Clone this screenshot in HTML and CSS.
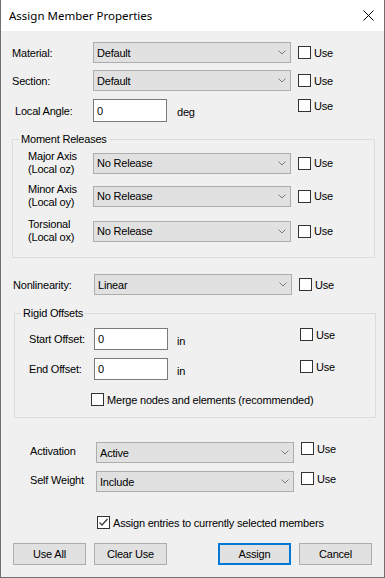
FILE: index.html
```html
<!DOCTYPE html>
<html lang="en">
<head>
  <meta charset="UTF-8">
  <title>Assign Member Properties</title>
  <link rel="stylesheet" href="styles.css">
</head>
<body>
  <div class="window">
    <!-- barra de titulo -->
    <div class="titlebar">
      <span class="title">Assign Member Properties</span>
      <svg class="close" width="11" height="11" viewBox="0 0 11 11">
        <path d="M0.5 0.5 L10.5 10.5 M10.5 0.5 L0.5 10.5" stroke="#000" stroke-width="1" fill="none"/>
      </svg>
    </div>

    <div class="content">
      <div class="row row-material">
        <span class="lbl">Material:</span>
        <div class="combo"><span>Default</span><svg width="8" height="5" viewBox="0 0 8 5"><polyline points="0.5,0.5 4,4 7.5,0.5" stroke="#7a7a7a" fill="none"/></svg></div>
        <label class="use"><span class="cb"></span>Use</label>
      </div>

      <div class="row row-section">
        <span class="lbl">Section:</span>
        <div class="combo"><span>Default</span><svg width="8" height="5" viewBox="0 0 8 5"><polyline points="0.5,0.5 4,4 7.5,0.5" stroke="#7a7a7a" fill="none"/></svg></div>
        <label class="use"><span class="cb"></span>Use</label>
      </div>

      <div class="row row-angle">
        <span class="lbl lbl-angle">Local Angle:</span>
        <input class="field" type="text" value="0">
        <span class="unit">deg</span>
        <label class="use use-top"><span class="cb"></span>Use</label>
      </div>

      <fieldset class="group group-moment">
        <legend>Moment Releases</legend>
        <div class="row row-major">
          <span class="lbl lbl-group">Major Axis<br>(Local oz)</span>
          <div class="combo"><span>No Release</span><svg width="8" height="5" viewBox="0 0 8 5"><polyline points="0.5,0.5 4,4 7.5,0.5" stroke="#7a7a7a" fill="none"/></svg></div>
          <label class="use"><span class="cb"></span>Use</label>
        </div>
        <div class="row row-minor">
          <span class="lbl lbl-group">Minor Axis<br>(Local oy)</span>
          <div class="combo"><span>No Release</span><svg width="8" height="5" viewBox="0 0 8 5"><polyline points="0.5,0.5 4,4 7.5,0.5" stroke="#7a7a7a" fill="none"/></svg></div>
          <label class="use"><span class="cb"></span>Use</label>
        </div>
        <div class="row row-torsion">
          <span class="lbl lbl-group">Torsional<br>(Local ox)</span>
          <div class="combo"><span>No Release</span><svg width="8" height="5" viewBox="0 0 8 5"><polyline points="0.5,0.5 4,4 7.5,0.5" stroke="#7a7a7a" fill="none"/></svg></div>
          <label class="use"><span class="cb"></span>Use</label>
        </div>
      </fieldset>

      <div class="row row-nonlin">
        <span class="lbl lbl-nonlin">Nonlinearity:</span>
        <div class="combo"><span>Linear</span><svg width="8" height="5" viewBox="0 0 8 5"><polyline points="0.5,0.5 4,4 7.5,0.5" stroke="#7a7a7a" fill="none"/></svg></div>
        <label class="use"><span class="cb"></span>Use</label>
      </div>

      <fieldset class="group group-rigid">
        <legend>Rigid Offsets</legend>
        <div class="row row-start">
          <span class="lbl lbl-offset">Start Offset:</span>
          <input class="field field-offset" type="text" value="0">
          <span class="unit unit-offset">in</span>
          <label class="use use-top"><span class="cb"></span>Use</label>
        </div>
        <div class="row row-end">
          <span class="lbl lbl-offset">End Offset:</span>
          <input class="field field-offset" type="text" value="0">
          <span class="unit unit-offset">in</span>
          <label class="use use-top2"><span class="cb"></span>Use</label>
        </div>
        <label class="check row-merge"><span class="cb"></span>Merge nodes and elements (recommended)</label>
      </fieldset>

      <div class="row row-activation">
        <span class="lbl lbl-bottom">Activation</span>
        <div class="combo"><span>Active</span><svg width="8" height="5" viewBox="0 0 8 5"><polyline points="0.5,0.5 4,4 7.5,0.5" stroke="#7a7a7a" fill="none"/></svg></div>
        <label class="use use-top"><span class="cb"></span>Use</label>
      </div>

      <div class="row row-weight">
        <span class="lbl lbl-bottom">Self Weight</span>
        <div class="combo"><span>Include</span><svg width="8" height="5" viewBox="0 0 8 5"><polyline points="0.5,0.5 4,4 7.5,0.5" stroke="#7a7a7a" fill="none"/></svg></div>
        <label class="use use-top1"><span class="cb"></span>Use</label>
      </div>

      <label class="check row-assign">
        <span class="cb cb-checked"><svg width="11" height="11" viewBox="0 0 11 11"><polyline points="1.5,5.5 4,8 9.5,2" stroke="#3c3c3c" stroke-width="1.3" fill="none"/></svg></span>
        Assign entries to currently selected members
      </label>

      <!-- botoes -->
      <div class="buttons">
        <button class="btn">Use All</button>
        <button class="btn">Clear Use</button>
        <button class="btn btn-default">Assign</button>
        <button class="btn">Cancel</button>
      </div>
    </div>
  </div>
</body>
</html>
```

FILE: styles.css
```css
body {
  margin: 0;
  font-family: "Liberation Sans", Arial, sans-serif;
  font-size: 11px;
  letter-spacing: -0.2px;
  color: #000;
  background: #f0f0f0;
}
.window {
  width: 385px;
  height: 578px;
  box-sizing: border-box;
  border: 1px solid #707070;
  border-top: none;
  background: #f0f0f0;
}
.titlebar {
  height: 31px;
  background: #fff;
  display: flex;
  align-items: center;
  justify-content: space-between;
  padding: 0 10px 0 8px;
}
.title {
  font-family: "Noto Sans", "Liberation Sans", sans-serif;
  font-size: 11.5px;
  letter-spacing: 0;
}
.close {
  display: block;
}
.content {
  padding: 0 9px 0 11px;
}
.row {
  display: flex;
  align-items: center;
}
.lbl {
  flex: none;
  width: 81px;
  box-sizing: border-box;
}
.combo {
  flex: none;
  width: 198px;
  height: 21px;
  box-sizing: border-box;
  border: 1px solid #adadad;
  background: #e1e1e1;
  display: flex;
  align-items: center;
  justify-content: space-between;
  padding: 0 4px 0 3px;
}
.combo svg {
  display: block;
}
.use {
  display: flex;
  align-items: center;
  gap: 3px;
  margin-left: 7px;
}
.use-top {
  align-self: flex-start;
}
.use-top1 {
  align-self: flex-start;
  margin-top: 1px;
}
.use-top2 {
  align-self: flex-start;
  margin-top: 2px;
}
.cb {
  flex: none;
  width: 13px;
  height: 13px;
  box-sizing: border-box;
  border: 1px solid #333;
  background: #fff;
  display: flex;
  align-items: center;
  justify-content: center;
}
.check {
  display: flex;
  align-items: center;
  gap: 3px;
}
.field {
  flex: none;
  width: 74px;
  height: 23px;
  box-sizing: border-box;
  border: 1px solid #7a7a7a;
  background: #fff;
  padding: 0 3px;
  margin: 0;
  font-family: inherit;
  font-size: 11px;
  letter-spacing: -0.2px;
  outline: none;
}
.unit {
  flex: none;
  width: 124px;
  box-sizing: border-box;
  padding-left: 10px;
  padding-top: 3px;
}

/* linhas de cima */
.row-material {
  margin-top: 11px;
}
.row-section {
  margin-top: 7px;
}
.row-angle {
  margin-top: 8px;
}
.lbl-angle {
  padding-left: 3px;
}

/* grupos */
.group {
  margin: 10px 0 0 0;
  padding: 4px 0 13px 0;
  border: 1px solid #dcdcdc;
  min-width: 0;
}
.group legend {
  margin-left: 6px;
  padding: 0 2px;
  line-height: 14px;
}
.lbl-group {
  width: 80px;
  padding-left: 15px;
  line-height: 13px;
}
.row-minor {
  margin-top: 7px;
}
.row-torsion {
  margin-top: 9px;
}
.row-nonlin {
  margin-top: 16px;
}
.lbl-nonlin {
  padding-left: 1px;
  width: 82px;
}
.group-rigid {
  margin: 11px -1px 0 2px;
  padding: 8px 0 11px 0;
}
.lbl-offset {
  width: 79px;
  padding-left: 14px;
}
.field-offset {
  height: 22px;
}
.unit-offset {
  width: 125px;
  padding-left: 9px;
}
.row-end {
  margin-top: 8px;
}
.row-merge {
  margin-top: 13px;
  padding-left: 76px;
}

/* ativacao */
.row-activation {
  margin-top: 24px;
}
.lbl-bottom {
  width: 84px;
  padding-left: 18px;
  padding-bottom: 3px;
}
.row-weight {
  margin-top: 8px;
}
.row-assign {
  margin-top: 24px;
  padding-left: 85px;
}
.cb-checked svg {
  display: block;
}

/* botoes */
.buttons {
  display: flex;
  gap: 8px;
  margin: 14px 0 0 1px;
}
.btn {
  width: 73px;
  height: 22px;
  box-sizing: border-box;
  border: 1px solid #adadad;
  background: #e1e1e1;
  font-family: inherit;
  font-size: 11px;
  letter-spacing: -0.2px;
  color: #000;
  padding: 0;
}
.btn-default {
  border: 2px solid #0078d7;
  margin-left: 43px;
}
```
